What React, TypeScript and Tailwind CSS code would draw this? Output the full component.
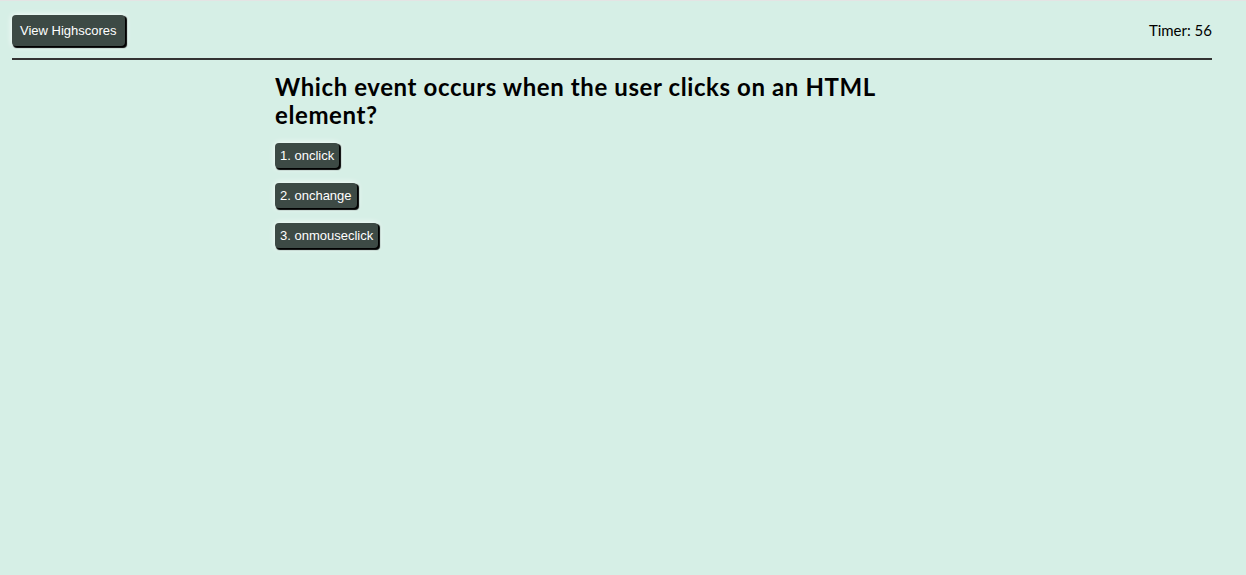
const answers = ["1. onclick", "2. onchange", "3. onmouseclick"];

export default function App() {
  return (
    <div className="min-h-[575px] bg-[#d6efe6] border-t border-[#e4e4e4] font-['Lato',sans-serif] text-black">
      {/* Header */}
      <header className="ml-3 mr-[34px] flex items-center justify-between border-b-2 border-[#333] pt-[14px] pb-3">
        <button className="h-[31px] rounded-[4px] bg-[#3d4a45] px-2 font-['Liberation_Sans',sans-serif] text-[13px] text-white shadow-[1.5px_1.5px_1px_#000,0_0_6px_#fff]">
          View Highscores
        </button>
        <span className="text-[15px]">Timer: 56</span>
      </header>

      {/* Question */}
      <main className="ml-[275px] w-[625px] pt-[13px]">
        <h1 className="text-[24px] font-bold leading-[28px] tracking-[0.6px]">
          Which event occurs when the user clicks on an HTML element?
        </h1>
        <div className="mt-[14px] flex flex-col items-start gap-[15px]">
          {answers.map((a) => (
            <button
              key={a}
              className="h-[25px] rounded-[4px] bg-[#3d4a45] px-[5px] font-['Liberation_Sans',sans-serif] text-[13px] text-white shadow-[1.5px_1.5px_1px_#000,0_0_6px_#fff]"
            >
              {a}
            </button>
          ))}
        </div>
      </main>
    </div>
  );
}
